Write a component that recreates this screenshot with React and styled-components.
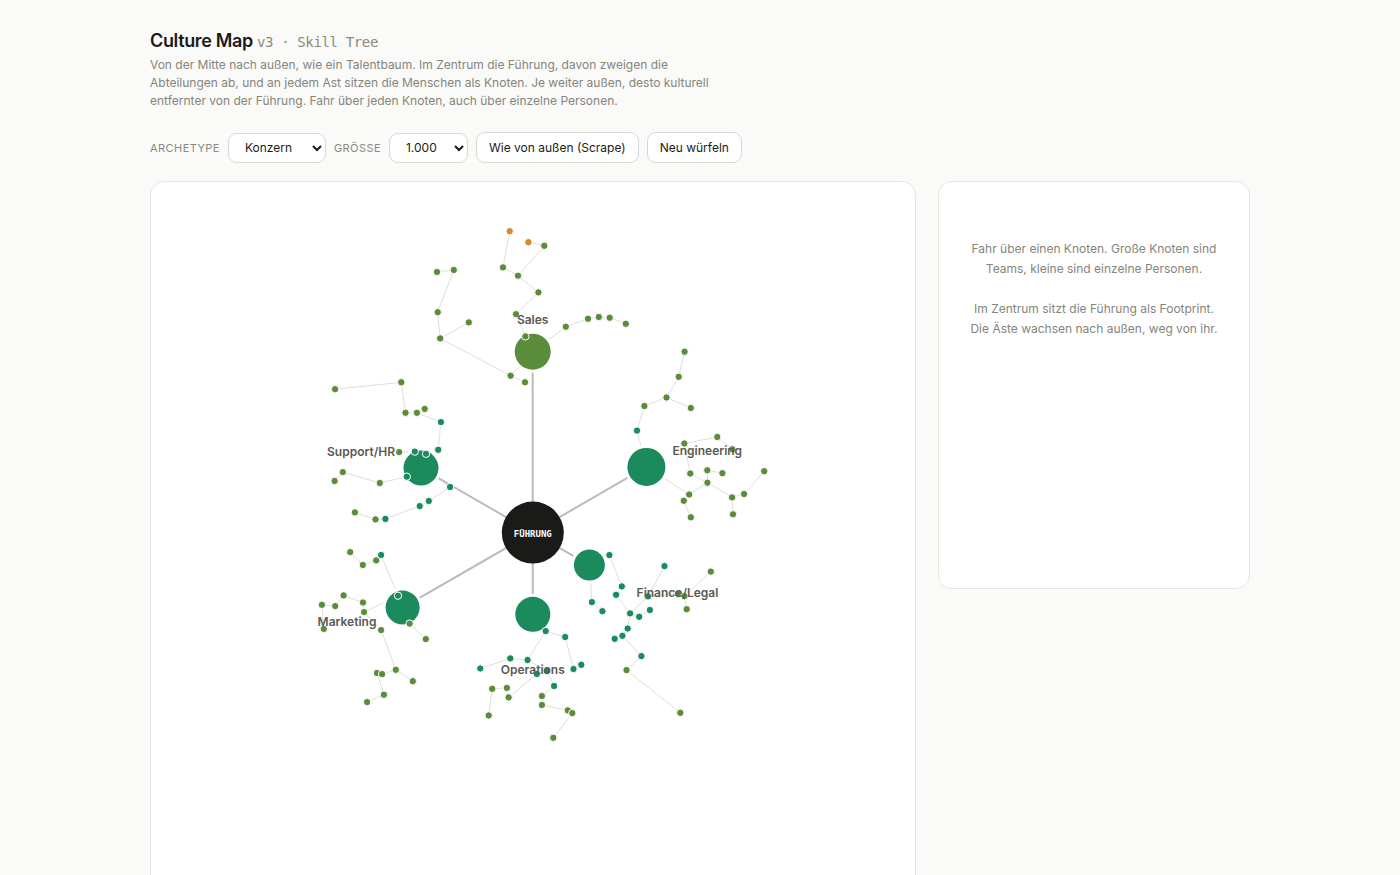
import React, { useState } from 'react'
import styled, { createGlobalStyle } from 'styled-components'

const GREEN = '#5b8c3c'
const TEAL = '#1b8a5c'
const ORANGE = '#d9862e'

const CENTER = { x: 532.8, y: 532.6, r: 31 }

// nodes: [x, y, color], links: pairs of node indexes, -1 is the team itself
const teams = [
  {
    name: 'Sales', x: 532.7, y: 351.7, r: 18, color: GREEN, labelX: 532.7, labelY: 324,
    nodes: [
      [509.7, 231.2, ORANGE], [528.4, 242.2, ORANGE], [544.3, 245.8], [503, 267.4], [518, 275.7],
      [538.4, 292.4], [516, 314.2], [525.4, 336.4], [437, 272], [453.8, 270],
      [437.7, 312.2], [468.8, 322.4], [440.2, 338.4], [510.6, 375.7], [525, 382.3],
      [565.8, 326.7], [588, 318.8], [598.8, 317], [609.7, 317.7], [625.8, 323.8],
    ],
    links: [
      [0, 3], [3, 4], [1, 2], [2, 4], [4, 5], [5, 6], [6, 7], [8, 9], [9, 10], [10, 12],
      [11, 12], [12, 13], [13, 14], [-1, 13], [-1, 15], [15, 16], [16, 17], [17, 18], [18, 19],
    ],
  },
  {
    name: 'Engineering', x: 646.4, y: 466.9, r: 19, color: TEAL, labelX: 707.3, labelY: 455,
    nodes: [
      [684.6, 351.7], [678.7, 376.8], [666.5, 397.5], [690.8, 408], [644.4, 406],
      [637, 430.6, TEAL], [684.3, 443.5], [717.3, 437], [732.4, 449.3], [690.3, 473.5],
      [707.3, 470.3], [722.4, 473.2], [707.4, 482.7], [689.2, 494.5], [683.8, 500.8],
      [690.8, 517.3], [732.1, 497.4], [744.1, 494], [764.2, 471.2], [733, 514.3],
    ],
    links: [
      [0, 1], [1, 2], [2, 3], [2, 4], [4, 5], [5, -1], [8, 7], [7, 6], [6, 9], [9, 12],
      [10, 12], [10, 11], [12, 13], [13, -1], [13, 14], [14, 15], [12, 16], [16, 17], [17, 18], [16, 19],
    ],
  },
  {
    name: 'Finance/Legal', x: 589.4, y: 565.1, r: 15.5, color: TEAL, labelX: 677.5, labelY: 597,
    nodes: [
      [609.4, 555.1, TEAL], [621.8, 586.4, TEAL], [616.1, 594.8, TEAL], [591.9, 602.1, TEAL], [602.4, 611.2, TEAL],
      [630.1, 613.4, TEAL], [639.2, 616.8, TEAL], [649.9, 610, TEAL], [648, 596.4, TEAL], [664.5, 566.1, TEAL],
      [627.7, 628.5, TEAL], [622.4, 635.8, TEAL], [614.7, 638.8, TEAL], [641.4, 656.1, TEAL], [626.5, 670.1],
      [680.3, 712.8], [710.8, 571.6], [677.8, 593.8], [684.4, 596.2], [686.7, 609.2],
    ],
    links: [
      [-1, 3], [3, 4], [0, 1], [1, 2], [2, 5], [5, 6], [6, 7], [5, 8], [8, 9], [8, 17],
      [17, 18], [18, 16], [18, 19], [5, 10], [10, 11], [11, 12], [11, 13], [13, 14], [14, 15],
    ],
  },
  {
    name: 'Operations', x: 532.8, y: 614.3, r: 17.5, color: TEAL, labelX: 532.8, labelY: 674,
    nodes: [
      [545.7, 631.1, TEAL], [565.2, 637, TEAL], [573.5, 669, TEAL], [581.3, 664.8, TEAL], [527.6, 660, TEAL],
      [510.3, 658.4, TEAL], [480.3, 668.5, TEAL], [536.8, 674, TEAL], [546.8, 671, TEAL], [554.1, 686, TEAL],
      [541.9, 696], [541.9, 705], [567.8, 710.4], [572.3, 713.1], [553.3, 737.8],
      [506.9, 687.9], [508.6, 697.4], [492.2, 688.8], [488.7, 715.5],
    ],
    links: [
      [0, 1], [1, 2], [2, 3], [0, 4], [4, 5], [5, 6], [4, 8], [8, 9], [9, 10], [10, 11],
      [11, 12], [12, 13], [13, 14], [8, 7], [7, 16], [16, 15], [15, 17], [17, 18],
    ],
  },
  {
    name: 'Marketing', x: 402.6, y: 607.6, r: 17, color: TEAL, labelX: 347, labelY: 626,
    nodes: [
      [381.1, 555, TEAL], [376.2, 560.4], [362.8, 565], [350.2, 552.1], [398, 595.7, TEAL],
      [363, 602.5], [364.1, 612.1], [343.6, 595.4], [335.2, 606.1], [321.9, 604.8],
      [323.8, 628.9], [409.6, 623.6], [425.8, 639.1], [381.1, 630.1], [395.8, 669.8],
      [412.8, 681.2], [377, 673], [382.1, 674.1], [383.9, 694.7], [367.1, 702.1],
    ],
    links: [
      [0, 4], [0, 1], [1, 2], [2, 3], [4, 6], [6, 5], [5, 7], [7, 8], [8, 9], [9, 10],
      [11, 12], [6, 13], [13, 14], [14, 15], [14, 17], [17, 16], [16, 18], [18, 19],
    ],
  },
  {
    name: 'Support/HR', x: 421, y: 468, r: 17.5, color: TEAL, labelX: 361, labelY: 456,
    nodes: [
      [335.1, 389.2], [401.3, 382.3], [405.5, 412.8], [416.9, 412.8], [424.7, 408.9],
      [440.9, 422.1, TEAL], [438.2, 449.8, TEAL], [399.2, 452.1], [414.8, 451.6, TEAL], [426, 453.8, TEAL],
      [406.8, 476.7, TEAL], [342.8, 472.1], [334.6, 481], [379.8, 483], [450.1, 487, TEAL],
      [428.8, 501, TEAL], [419.7, 506.1, TEAL], [354.9, 512.4], [375.5, 519.4], [385.4, 518.9, TEAL],
    ],
    links: [
      [0, 1], [1, 2], [2, 3], [3, 4], [3, 5], [5, 6], [6, 9], [7, 8], [8, 9], [10, 13],
      [13, 11], [11, 12], [-1, 14], [14, 15], [15, 16], [16, 19], [19, 18], [18, 17],
    ],
  },
]

const Team = ({ team }) => {
  const point = (i) => (i < 0 ? [team.x, team.y] : team.nodes[i])
  return (
    <g>
      {team.links.map(([a, b]) => (
        <Branch
          key={`${a}-${b}`}
          x1={point(a)[0]}
          y1={point(a)[1]}
          x2={point(b)[0]}
          y2={point(b)[1]}
        />
      ))}
      <Halo cx={team.x} cy={team.y} r={team.r + 3} />
      <circle cx={team.x} cy={team.y} r={team.r} fill={team.color} />
      {team.nodes.map(([x, y, color]) => (
        <Person key={`${x}-${y}`} cx={x} cy={y} r={3.7} fill={color || GREEN} />
      ))}
      <TeamLabel x={team.labelX} y={team.labelY}>{team.name}</TeamLabel>
    </g>
  )
}

const SkillTree = () => (
  <Tree viewBox="151 182 764 703" role="img" aria-label="Skill Tree">
    {teams.map((team) => (
      <Trunk key={team.name} x1={CENTER.x} y1={CENTER.y} x2={team.x} y2={team.y} />
    ))}
    {teams.map((team) => (
      <Team key={team.name} team={team} />
    ))}
    <circle cx={CENTER.x} cy={CENTER.y} r={CENTER.r} fill="#1a1a18" />
    <CenterLabel x={CENTER.x} y={CENTER.y + 4}>FÜHRUNG</CenterLabel>
  </Tree>
)

const App = () => {
  const [archetype, setArchetype] = useState('Konzern')
  const [size, setSize] = useState('1.000')

  return (
    <>
      <GlobalStyle />
      <Page>
        <header>
          <Title>
            Culture Map <Version>v3 · Skill Tree</Version>
          </Title>
          <Intro>
            Von der Mitte nach außen, wie ein Talentbaum. Im Zentrum die Führung, davon zweigen die
            Abteilungen ab, und an jedem Ast sitzen die Menschen als Knoten. Je weiter außen, desto
            kulturell entfernter von der Führung. Fahr über jeden Knoten, auch über einzelne Personen.
          </Intro>
        </header>

        <Toolbar>
          <Label htmlFor="archetype">Archetype</Label>
          <Select id="archetype" $width={98} value={archetype} onChange={(e) => setArchetype(e.target.value)}>
            <option>Konzern</option>
            <option>Startup</option>
          </Select>
          <Label htmlFor="size">Grösse</Label>
          <Select id="size" $width={79} value={size} onChange={(e) => setSize(e.target.value)}>
            <option>100</option>
            <option>1.000</option>
          </Select>
          <Button type="button">Wie von außen (Scrape)</Button>
          <Button type="button">Neu würfeln</Button>
        </Toolbar>

        <Content>
          <TreeCard>
            <SkillTree />
          </TreeCard>
          <Details>
            <Hint>Fahr über einen Knoten. Große Knoten sind Teams, kleine sind einzelne Personen.</Hint>
            <Hint>Im Zentrum sitzt die Führung als Footprint. Die Äste wachsen nach außen, weg von ihr.</Hint>
          </Details>
        </Content>
      </Page>
    </>
  )
}

const GlobalStyle = createGlobalStyle`
  * {
    box-sizing: border-box;
  }
  body {
    margin: 0;
    background: #fafaf8;
    color: #1a1a18;
    font-family: Inter, sans-serif;
    -webkit-font-smoothing: antialiased;
  }
`

const Page = styled.main`
  max-width: 1148px;
  margin: 0 auto;
  padding: 29px 24px 40px;
`

const Title = styled.h1`
  margin: 0;
  font-size: 18px;
  font-weight: 600;
  line-height: 24px;
  letter-spacing: -0.02em;
`

const Version = styled.span`
  color: #8a8a80;
  font-family: 'DejaVu Sans Mono', monospace;
  font-size: 14px;
  font-weight: 400;
`

const Intro = styled.p`
  max-width: 580px;
  margin: 2px 0 0;
  color: #85857b;
  font-size: 12px;
  line-height: 18px;
`

const Toolbar = styled.div`
  display: flex;
  flex-wrap: wrap;
  align-items: center;
  gap: 8px;
  margin: 22px 0 18px;
`

const Label = styled.label`
  color: #8a8a80;
  font-size: 11px;
  letter-spacing: 0.04em;
  text-transform: uppercase;
`

const Select = styled.select`
  width: ${(props) => props.$width}px;
  height: 30px;
  padding: 0 0 0 12px;
  border: 1px solid #d8d8d2;
  border-radius: 9px;
  background: #fff;
  color: #1a1a18;
  font-family: inherit;
  font-size: 12px;
`

const Button = styled.button`
  height: 31px;
  padding: 0 12px;
  border: 1px solid #d8d8d2;
  border-radius: 9px;
  background: #fff;
  color: #1a1a18;
  font-family: inherit;
  font-size: 12px;
  cursor: pointer;
`

const Content = styled.div`
  display: grid;
  grid-template-columns: minmax(0, 1fr) 312px;
  align-items: start;
  gap: 22px;
`

const Card = styled.section`
  border: 1px solid #e6e6e0;
  border-radius: 14px;
  background: #fff;
`

const TreeCard = styled(Card)`
  padding-bottom: 20px;
`

const Details = styled(Card)`
  min-height: 408px;
  padding: 57px 28px;
`

const Hint = styled.p`
  margin: 0 0 20px;
  color: #85857b;
  font-size: 12px;
  line-height: 20px;
  text-align: center;
`

const Tree = styled.svg`
  display: block;
  width: 100%;
  height: auto;
`

const Trunk = styled.line`
  stroke: #bbbbb7;
  stroke-width: 2;
`

const Branch = styled.line`
  stroke: #dfdfd9;
  stroke-width: 1;
`

const Halo = styled.circle`
  fill: #fff;
`

const Person = styled.circle`
  stroke: #fff;
  stroke-width: 1;
`

const TeamLabel = styled.text`
  fill: #5a5a54;
  font-size: 12px;
  font-weight: 600;
  text-anchor: middle;
`

const CenterLabel = styled.text`
  fill: #fff;
  font-family: 'DejaVu Sans Mono', monospace;
  font-size: 9px;
  font-weight: 700;
  text-anchor: middle;
`

export default App
